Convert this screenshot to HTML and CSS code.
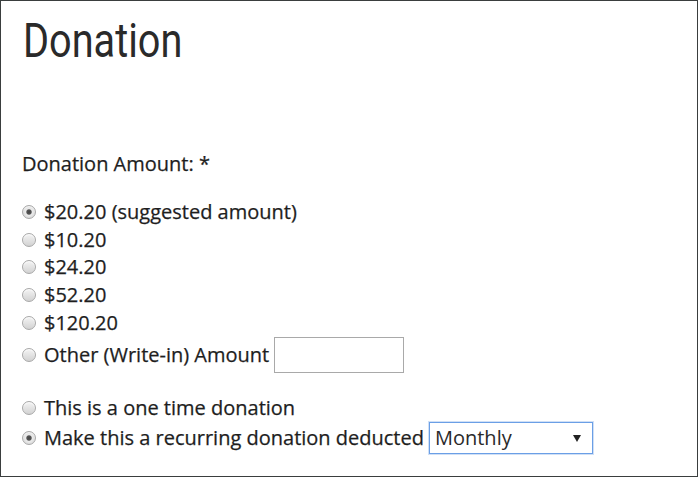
FILE: index.html
```html
<!DOCTYPE html>
<html lang="en">
<head>
<meta charset="utf-8">
<title>Donation</title>
<link rel="stylesheet" href="styles.css">
</head>
<body>
<div class="frame">
  <h1 class="title">Donation</h1>
  <div class="label-row">Donation Amount: *</div>
  <div class="group amounts">
    <label class="row"><input type="radio" name="amt" class="radio" checked><span>$20.20 (suggested amount)</span></label>
    <label class="row"><input type="radio" name="amt" class="radio"><span>$10.20</span></label>
    <label class="row"><input type="radio" name="amt" class="radio"><span>$24.20</span></label>
    <label class="row"><input type="radio" name="amt" class="radio"><span>$52.20</span></label>
    <label class="row"><input type="radio" name="amt" class="radio"><span>$120.20</span></label>
    <label class="row row-other"><input type="radio" name="amt" class="radio"><span>Other (Write-in) Amount</span><input type="text" class="text-input"></label>
  </div>
  <div class="group freq">
    <label class="row"><input type="radio" name="freq" class="radio"><span>This is a one time donation</span></label>
    <label class="row row-select"><input type="radio" name="freq" class="radio" checked><span>Make this a recurring donation deducted</span><span class="select-wrap"><select class="select"><option>Monthly</option></select></span></label>
  </div>
</div>
</body>
</html>
```

FILE: styles.css
```css
html, body {
  margin: 0;
  padding: 0;
  background: #ffffff;
}

.frame {
  box-sizing: border-box;
  width: 698px;
  height: 477px;
  border: 1px solid #3a3e3e;
  padding: 10px 21px 0 21px;
  font-family: "Open Sans", "Liberation Sans", sans-serif;
  font-size: 20px;
  color: #1e1e1e;
  -webkit-text-stroke: 0.25px #1e1e1e;
  overflow: hidden;
}

.title {
  margin: 0;
  height: 60px;
  line-height: 60px;
  font-family: Roboto, "Liberation Sans", sans-serif;
  font-weight: 400;
  font-size: 49px;
  color: #2a2a2a;
  -webkit-text-stroke: 0;
  transform: scaleX(0.81);
  transform-origin: left center;
  white-space: nowrap;
  position: relative;
  left: 1px;
}

.label-row {
  margin-top: 79px;
  height: 28px;
  line-height: 28px;
}

.group {
  display: flex;
  flex-direction: column;
}

.amounts {
  margin-top: 20px;
}

.freq {
  margin-top: 21px;
}

.row {
  display: flex;
  align-items: center;
  height: 27.75px;
  line-height: 28px;
  white-space: nowrap;
}

.row-other {
  height: 36px;
}

.row-select {
  height: 32px;
}

.radio {
  appearance: none;
  -webkit-appearance: none;
  box-sizing: border-box;
  width: 14px;
  height: 14px;
  margin: 0 8px 0 0;
  border-radius: 50%;
  border: 1px solid #a8a8a8;
  background: linear-gradient(#f4f4f4, #d2d2d2);
  box-shadow: inset 0 1px 1px rgba(255,255,255,0.8);
  position: relative;
  flex: none;
}

.radio:checked {
  background: radial-gradient(circle, #444 0, #555 2.2px, #ececec 3.2px, #d6d6d6 7px);
}

.text-input {
  box-sizing: border-box;
  width: 130px;
  height: 36px;
  margin: 0 0 0 5px;
  border: 1px solid #a9a9a9;
  background: #fff;
  padding: 0 6px;
  font: inherit;
}

.select-wrap {
  position: relative;
  display: inline-block;
  margin-left: 5px;
  height: 32px;
}

.select {
  appearance: none;
  -webkit-appearance: none;
  box-sizing: border-box;
  width: 164px;
  height: 32px;
  margin: 0;
  border: 1px solid #6b9fe6;
  box-shadow: 0 0 0 1px rgba(120,165,230,0.35);
  border-radius: 0;
  background: #fff;
  padding: 0 0 0 5px;
  font-family: "Open Sans", "Liberation Sans", sans-serif;
  font-size: 20px;
  color: #2a2a2a;
  -webkit-text-stroke: 0;
}

.select-wrap::after {
  content: "";
  position: absolute;
  right: 12px;
  top: 13px;
  width: 0;
  height: 0;
  border-left: 4px solid transparent;
  border-right: 4px solid transparent;
  border-top: 7px solid #222;
  pointer-events: none;
}
```
